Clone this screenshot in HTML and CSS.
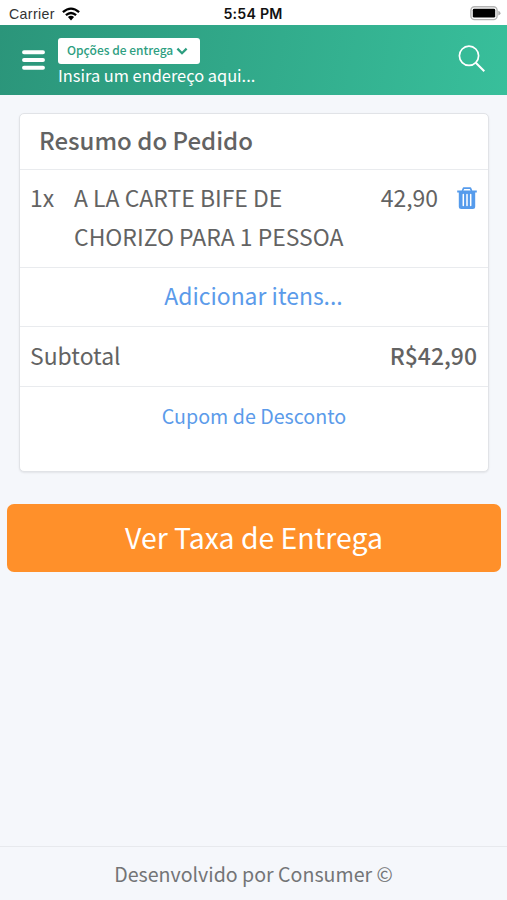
FILE: index.html
```html
<!DOCTYPE html>
<html lang="pt-BR">
<head>
<meta charset="utf-8">
<title>Resumo do Pedido</title>
<link rel="stylesheet" href="styles.css">
</head>
<body>
<div class="status">
  <div class="carrier"><span>Carrier</span>
    <svg class="wifi" viewBox="0 0 18 14" width="18" height="14"><g fill="none" stroke="#000" stroke-width="2.3"><path d="M.9 5.2Q9-2 17.1 5.2"/><path d="M3.9 8.2Q9 3.8 14.1 8.2"/></g><path d="M5.9 10.1Q9 7.5 12.1 10.1L9 13.4Z"/></svg>
  </div>
  <div class="clock">5:54 PM</div>
  <svg class="battery" viewBox="0 0 31 15" width="31" height="15"><rect x=".9" y=".8" width="26.2" height="12.8" rx="3.6" fill="#fff" stroke="#b4b4b4" stroke-width="1.4"/><rect x="2.8" y="2.8" width="22.4" height="8.8" rx="1.4"/><path d="M28.3 4.8Q30.5 5.7 30.5 7.2T28.3 9.6Z" fill="#aaa"/></svg>
</div>
<header class="topbar">
  <svg class="menu" viewBox="0 0 23 20" width="23" height="20"><path d="M2 2.3H21M2 10H21M2 17.7H21" stroke="#fff" stroke-width="3.9" stroke-linecap="round"/></svg>
  <div class="delivery">
    <button class="options"><span>Opções de entrega</span><svg viewBox="0 0 12 8" width="12" height="8"><path d="M1.4 1.6L6 6.2L10.6 1.6" fill="none" stroke="#2d9e80" stroke-width="2.3"/></svg></button>
    <div class="address">Insira um endereço aqui...</div>
  </div>
  <svg class="search" viewBox="0 0 28 28" width="28" height="28"><g fill="none" stroke="#fff" stroke-width="1.7"><circle cx="11" cy="10.8" r="9.6"/><path d="M17.8 17.8L26.3 26.3" stroke-width="2"/></g></svg>
</header>
<main class="content">
  <section class="card">
    <h1 class="title">Resumo do Pedido</h1>
    <div class="item">
      <span class="qty">1x</span>
      <span class="name">A LA CARTE BIFE DE<br>CHORIZO PARA 1 PESSOA</span>
      <span class="price">42,90</span>
      <svg class="trash" viewBox="0 0 20 23" width="20" height="23"><path d="M5.4 4L6.6 1.2H13.4L14.6 4" fill="none" stroke="#559bec" stroke-width="1.7" stroke-linejoin="round"/><path d="M.2 3.6H19.8V5.5H18.2V19.5Q18.2 22 15.7 22H4.3Q1.8 22 1.8 19.5V5.5H.2Z" fill="#559bec"/><path d="M6.3 7.4V18.4M10 7.4V18.4M13.7 7.4V18.4" stroke="#fff" stroke-width="1.5" stroke-linecap="round"/></svg>
    </div>
    <a class="add">Adicionar itens...</a>
    <div class="subtotal"><span>Subtotal</span><strong>R$42,90</strong></div>
    <a class="coupon">Cupom de Desconto</a>
  </section>
  <button class="primary">Ver Taxa de Entrega</button>
</main>
<footer class="footer">Desenvolvido por Consumer ©</footer>
</body>
</html>
```

FILE: styles.css
```css
* { box-sizing: border-box; }
body {
  margin: 0;
  height: 900px;
  display: flex;
  flex-direction: column;
  overflow: hidden;
  background: #f5f7fb;
  color: #636363;
  font-family: "Noto Sans CJK SC", sans-serif;
}
svg { display: block; flex: none; }
button { border: 0; margin: 0; font-family: inherit; font-weight: 400; }

.status {
  height: 25px;
  padding: 2px 6px 0 9px;
  display: grid;
  grid-template-columns: 1fr auto 1fr;
  align-items: center;
  background: #fff;
  color: #111;
  font-family: "Liberation Sans", sans-serif;
  font-size: 14.2px;
}
.carrier { display: flex; align-items: center; gap: 7px; color: #333; letter-spacing: .35px; }
.clock { font-family: Inter, sans-serif; font-weight: 600; font-size: 14.2px; letter-spacing: .2px; margin-right: 4px; }
.battery { justify-self: end; }

.topbar {
  height: 70px;
  padding: 13px 21px 0 22px;
  display: flex;
  align-items: flex-start;
  background: linear-gradient(100deg, #2b957a, #38bf9b);
  color: #fff;
}
.menu { margin-top: 12px; }
.delivery { flex: 1; margin-left: 13px; }
.options {
  width: 142px;
  height: 26px;
  padding: 0 0 3px 9px;
  display: flex;
  align-items: center;
  gap: 3px;
  border-radius: 3px;
  background: #fff;
  color: #2d9e80;
  font-size: 12px;
  font-weight: 500;
  white-space: nowrap;
}
.options svg { margin-top: 3px; }
.address { font-size: 16.4px; line-height: 22px; white-space: nowrap; }
.search { margin-top: 7px; }

.content { flex: 1; padding: 18px 6px 0 7px; }
.card {
  height: 359px;
  margin: 0 12px;
  border: 1px solid #e1e3e7;
  border-radius: 5px;
  background: #fff;
  box-shadow: 0 1px 2px rgba(0, 0, 0, .08);
  font-size: 22.95px;
}
.title {
  margin: 0;
  height: 55px;
  padding-left: 19px;
  font-size: 24px;
  font-weight: 500;
  line-height: 51px;
}
.item {
  height: 98px;
  padding: 8px 11px 0 10px;
  display: flex;
  border-top: 1px solid #e9ebee;
  line-height: 39px;
}
.qty { width: 44px; }
.name { flex: 1; white-space: nowrap; }
.trash { margin: 9px 0 0 19px; }
.add, .coupon { display: block; text-align: center; color: #5b9bea; border-top: 1px solid #e9ebee; }
.add { height: 59px; padding-right: 1px; line-height: 55px; }
.subtotal {
  height: 60px;
  padding: 0 11px 0 10px;
  display: flex;
  justify-content: space-between;
  border-top: 1px solid #e9ebee;
  line-height: 57px;
}
.subtotal strong { font-weight: 500; }
.coupon { line-height: 58px; font-size: 19.65px; }
.primary {
  display: block;
  width: 100%;
  height: 68px;
  margin-top: 32px;
  padding: 0 0 3px;
  border-radius: 7px;
  background: #ff902a;
  color: #fff;
  font-size: 28.4px;
  line-height: 65px;
}
.footer {
  height: 54px;
  border-top: 1px solid #e7e9ed;
  color: #737476;
  font-size: 19.6px;
  line-height: 53px;
  text-align: center;
}
```
